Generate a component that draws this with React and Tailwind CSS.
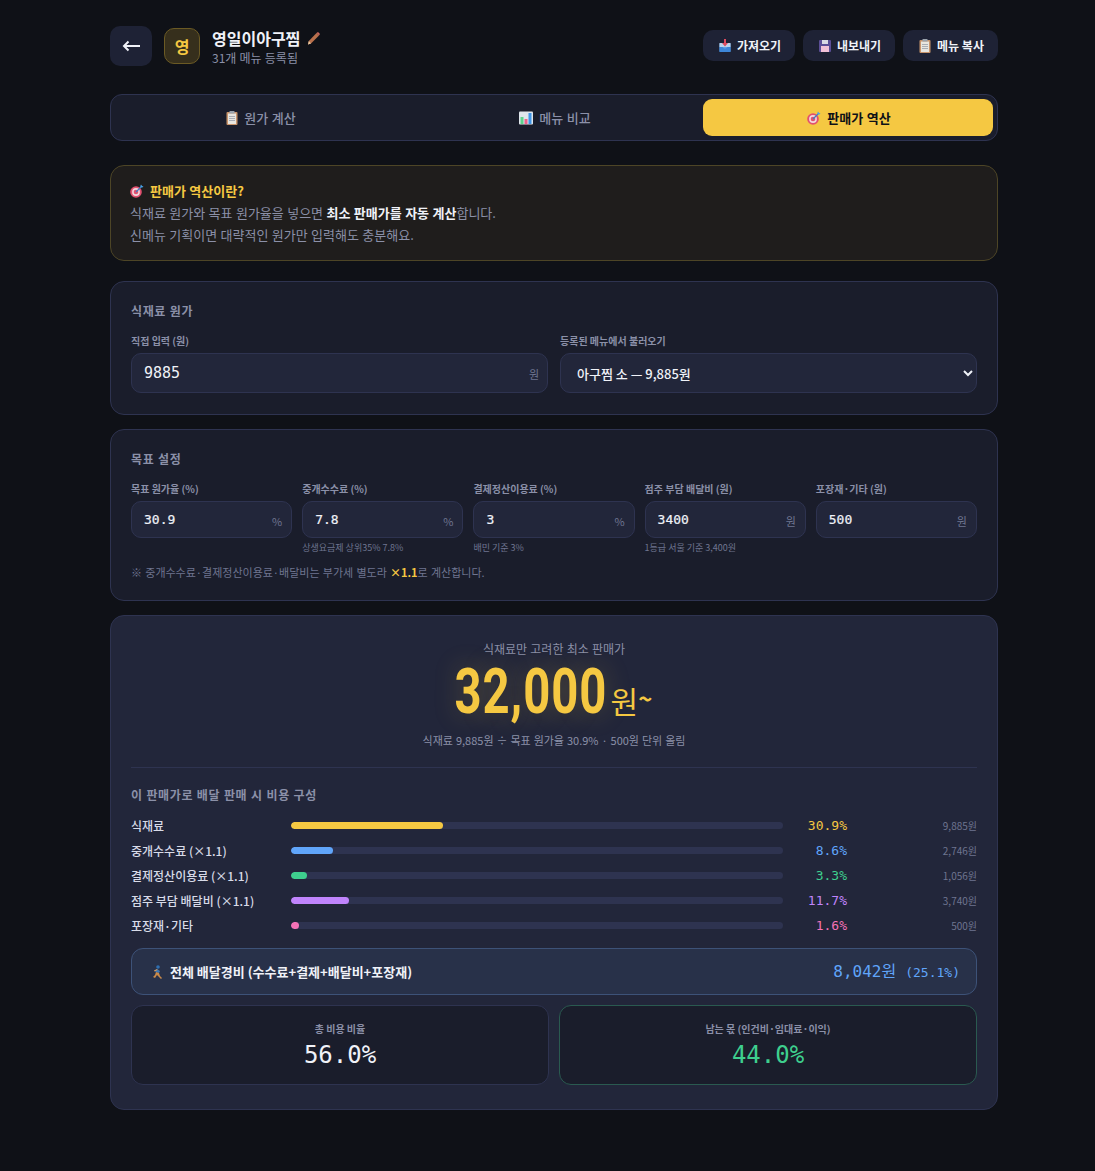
const sans = "font-['Noto_Sans_CJK_KR','Noto_Sans',sans-serif] [word-spacing:0.5px]";
const mono = "font-['DejaVu_Sans_Mono','Noto_Sans_CJK_KR',monospace] [word-spacing:0]";

const Clipboard = () => (
  <svg width="12" height="14" viewBox="0 0 12 14" className="shrink-0">
    <rect x="0.5" y="1" width="11" height="13" rx="1" fill="#c9956c" />
    <rect x="2" y="2.5" width="8" height="10.5" fill="#e8e6e0" />
    <rect x="3.5" y="0" width="5" height="2.5" rx="0.5" fill="#9aa3ad" />
    <path d="M3 5.5h6M3 7.5h6M3 9.5h6" stroke="#a9adb5" strokeWidth="1" />
  </svg>
);
const Chart = () => (
  <svg width="14" height="14" viewBox="0 0 14 14" className="shrink-0">
    <rect x="0" y="0.5" width="14" height="13" rx="1" fill="#dfe6ec" />
    <rect x="1.5" y="6" width="3" height="7" fill="#5fd38d" />
    <rect x="5.5" y="8" width="3" height="5" fill="#f0628c" />
    <rect x="9.5" y="2" width="3" height="11" fill="#3f96e8" />
  </svg>
);
const Target = () => (
  <svg width="14" height="14" viewBox="0 0 14 14" className="shrink-0">
    <circle cx="6" cy="8" r="5.8" fill="#e2506f" />
    <circle cx="6" cy="8" r="3.9" fill="#f3d7dd" />
    <circle cx="6" cy="8" r="2.3" fill="#e2506f" />
    <path d="M6 8 12 2" stroke="#3c7fc4" strokeWidth="1.3" />
    <path d="M10.5 1.5 11 0.5l1 1.5 1.5.5-1.2 1-1.8-.2z" fill="#4aa3e8" />
  </svg>
);
const Inbox = () => (
  <svg width="12" height="13" viewBox="0 0 12 13" className="shrink-0">
    <rect x="0.5" y="4" width="11" height="9" rx="1" fill="#5ea0e6" />
    <rect x="0.5" y="4" width="11" height="4" fill="#b9d4ee" />
    <path d="M3.5 8 5 9.5h2L8.500 8h3v5h-11V8z" fill="#3d86d8" />
    <path d="M5 0h2v4h2L6 7.500 3 4h2z" fill="#dd4b5e" />
  </svg>
);
const Floppy = () => (
  <svg width="12" height="12" viewBox="0 0 12 12" className="shrink-0">
    <rect x="0" y="0" width="12" height="12" rx="1" fill="#5b4e96" />
    <rect x="3" y="0" width="6" height="4" fill="#d9d9e4" />
    <rect x="2" y="6" width="8" height="6" fill="#f2c2d8" />
  </svg>
);
const Pencil = () => (
  <svg width="13" height="13" viewBox="0 0 13 13" className="shrink-0">
    <path d="M9.500 1 12 3.500 4 11.500 1 12.500 1.800 9z" fill="#b8704c" />
    <path d="M9.500 1 11 0l2 2-1 1.500z" fill="#d0695f" />
    <path d="M1.800 9 4 11.500 1 12.500z" fill="#e8c9a0" />
  </svg>
);
const Runner = () => (
  <svg width="11" height="14" viewBox="0 0 11 14" className="shrink-0">
    <circle cx="6" cy="2" r="1.800" fill="#2f6fb0" />
    <path d="M5 4 8 6 7 8 3 7z" fill="#3a76b5" />
    <path d="M4 7l3 1 1 3 2 2-1 1-3-3-1-1-2 3-2-1 2-2z" fill="#c98a4a" />
    <path d="M2 5.500 5 4l.500 1-3 1.500z" fill="#d9a066" />
  </svg>
);

function Field({ label, value, unit, hint }) {
  return (
    <div className="flex flex-col">
      <div className="text-[10px] leading-[15px] font-semibold text-[#8b90a8] mt-[1px] mb-[5px] [word-spacing:0]">{label}</div>
      <div className="h-[37px] rounded-[10px] border border-[#2e3350] bg-[#22263a] flex items-center justify-between pl-[12px] pr-[9px]">
        <span className={`${mono} text-[13px] text-[#f0f2f8] [-webkit-text-stroke:0.2px_#f0f2f8]`}>{value}</span>
        <span className="text-[11px] text-[#6f7590] mt-[3px]">{unit}</span>
      </div>
      {hint ? <div className="text-[9px] leading-[14px] text-[#6f7590] mt-[3px] [word-spacing:0]">{hint}</div> : null}
    </div>
  );
}

function Row({ label, pct, width, amount, barClass, textClass }) {
  return (
    <div className="h-[25px] flex items-center">
      <div className="w-[160px] shrink-0 text-[12px] font-medium text-[#d8dbe8] [word-spacing:0]">{label}</div>
      <div className="w-[492px] shrink-0 h-[7px] rounded-full bg-[#2e3350] overflow-hidden">
        <div className={`h-full rounded-full ${barClass}`} style={{ width }} />
      </div>
      <div className={`${mono} w-[64px] shrink-0 text-right text-[13px] ${textClass}`}>{pct}</div>
      <div className="flex-1 text-right text-[10px] text-[#6f7590]">{amount}</div>
    </div>
  );
}

function TopButton({ icon, label, w }) {
  return (
    <button className={`${w} h-[31px] pl-[2px] rounded-[10px] bg-[#1e2235] flex items-center justify-center gap-[6px] text-[12px] font-bold text-[#f0f2f8]`}>
      {icon}
      <span>{label}</span>
    </button>
  );
}

export default function App() {
  return (
    <div className={`${sans} min-h-[1171px] bg-[#0f1117] pt-[26px] pl-[110px] pr-[97px] pb-[61px]`}>
      <header className="flex items-center justify-between h-[40px]">
        <div className="flex items-center">
          <button className="w-[42px] h-[40px] rounded-[10px] bg-[#1e2235] text-[#f0f2f8] flex items-center justify-center">
            <svg width="18" height="12" viewBox="0 0 18 12" fill="none" stroke="currentColor" strokeWidth="2">
              <path d="M18 6H2M6.500 1.500 2 6l4.500 4.500" />
            </svg>
          </button>
          <div className="ml-[12px] w-[36px] h-[36px] rounded-[10px] border border-[#6b5a24] bg-[#362f1c] flex items-center justify-center text-[16px] font-bold text-[#f5c842]">영</div>
          <div className="ml-[12px]">
            <div className="flex items-center gap-[7px] text-[16px] leading-[21px] font-bold text-[#f0f2f8]">
              <span>영일이아구찜</span><Pencil />
            </div>
            <div className="mt-[2px] text-[12px] leading-[14px] text-[#8b90a8]">31개 메뉴 등록됨</div>
          </div>
        </div>
        <div className="flex gap-[8px] mb-[1px]">
          <TopButton icon={<Inbox />} label="가져오기" w="w-[92px]" />
          <TopButton icon={<Floppy />} label="내보내기" w="w-[92px]" />
          <TopButton icon={<Clipboard />} label="메뉴 복사" w="w-[95px]" />
        </div>
      </header>

      <nav className="mt-[28px] h-[47px] rounded-[12px] border border-[#2e3350] bg-[#1a1d2b] p-[4px] grid grid-cols-3 gap-[4px]">
        <div className="rounded-[9px] pl-[2px] flex items-center justify-center gap-[6px] text-[13px] font-medium text-[#8b90a8]"><Clipboard /><span>원가 계산</span></div>
        <div className="rounded-[9px] pl-[2px] flex items-center justify-center gap-[6px] text-[13px] font-medium text-[#8b90a8]"><Chart /><span>메뉴 비교</span></div>
        <div className="rounded-[9px] pl-[2px] bg-[#f5c842] flex items-center justify-center gap-[6px] text-[13px] font-bold text-[#0f1117]"><Target /><span>판매가 역산</span></div>
      </nav>

      <section className="mt-[24px] h-[96px] rounded-[14px] border border-[#4d4526] bg-[#1f1d1c] px-[19px] pt-[14px]">
        <div className="flex items-center gap-[6px] text-[13px] leading-[22px] font-bold text-[#f5c842]"><Target /><span>판매가 역산이란?</span></div>
        <div className="text-[13px] leading-[22px] text-[#8b90a8]">식재료 원가와 목표 원가율을 넣으면 <b className="font-bold text-[#f0f2f8]">최소 판매가를 자동 계산</b>합니다.</div>
        <div className="text-[13px] leading-[22px] text-[#8b90a8]">신메뉴 기획이면 대략적인 원가만 입력해도 충분해요.</div>
      </section>

      <section className="mt-[20px] h-[134px] rounded-[14px] border border-[#2e3350] bg-[#1a1d2b] px-[20px] pt-[19px]">
        <div className="text-[12px] leading-[20px] font-bold tracking-[0.05em] text-[#8b90a8]">식재료 원가</div>
        <div className="mt-[12px] grid grid-cols-2 gap-[12px]">
          <div>
            <div className="text-[10px] leading-[15px] font-semibold text-[#8b90a8] mb-[5px] [word-spacing:0]">직접 입력 (원)</div>
            <div className="h-[40px] rounded-[10px] border border-[#2e3350] bg-[#22263a] flex items-center justify-between pl-[12px] pr-[8px]">
              <span className={`${mono} text-[15px] text-[#f0f2f8]`}>9885</span>
              <span className="text-[11px] text-[#6f7590] mt-[3px]">원</span>
            </div>
          </div>
          <div>
            <div className="text-[10px] leading-[15px] font-semibold text-[#8b90a8] mb-[5px] [word-spacing:0]">등록된 메뉴에서 불러오기</div>
            <select defaultValue="a" className="w-full h-[40px] rounded-[10px] border border-[#2e3350] bg-[#22263a] pl-[12px] pr-[8px] text-[13px] font-medium text-[#f0f2f8]">
              <option value="a">아구찜 소 — 9,885원</option>
            </select>
          </div>
        </div>
      </section>

      <section className="mt-[14px] h-[172px] rounded-[14px] border border-[#2e3350] bg-[#1a1d2b] px-[20px] pt-[19px]">
        <div className="text-[12px] leading-[20px] font-bold tracking-[0.05em] text-[#8b90a8]">목표 설정</div>
        <div className="mt-[11px] grid grid-cols-5 gap-[10px]">
          <Field label="목표 원가율 (%)" value="30.9" unit="%" />
          <Field label="중개수수료 (%)" value="7.8" unit="%" hint="상생요금제 상위35% 7.8%" />
          <Field label="결제정산이용료 (%)" value="3" unit="%" hint="배민 기준 3%" />
          <Field label="점주 부담 배달비 (원)" value="3400" unit="원" hint="1등급 서울 기준 3,400원" />
          <Field label="포장재·기타 (원)" value="500" unit="원" />
        </div>
        <div className="mt-[9px] text-[11px] leading-[16px] text-[#6f7590] [word-spacing:0.8px]">※ 중개수수료·결제정산이용료·배달비는 부가세 별도라 <b className="font-bold text-[#f5c842]">×1.1</b>로 계산합니다.</div>
      </section>

      <section className="mt-[14px] h-[495px] rounded-[14px] border border-[#2e3350] bg-[#22263a] px-[20px] pt-[25px]">
        <div className="text-center text-[12px] leading-[16px] text-[#8b90a8]">식재료만 고려한 최소 판매가</div>
        <div className="h-[68px] flex items-start justify-center text-[#f5c842]">
          <span className="w-[150px] h-[62px] mt-[4px] flex justify-center">
            <span className="font-['Roboto',sans-serif] font-bold text-[63px] leading-[62px] tracking-[0.02em] shrink-0 inline-block whitespace-nowrap scale-x-[0.75] [text-shadow:0_0_30px_rgba(245,200,66,0.25)]">32,000</span>
          </span>
          <span className="text-[30px] leading-[40px] mt-[23px] ml-[5px]">원</span>
          <span className="text-[24px] leading-[40px] mt-[21px] font-bold">~</span>
        </div>
        <div className="mt-[7px] text-center text-[11px] leading-[16px] text-[#8b90a8]">식재료 9,885원 ÷ 목표 원가율 30.9% · 500원 단위 올림</div>

        <div className="mt-[19px] border-t border-[#2e3350]" />
        <div className="mt-[18px] text-[12px] leading-[18px] font-bold tracking-[0.05em] text-[#8b90a8]">이 판매가로 배달 판매 시 비용 구성</div>
        <div className="mt-[9px]">
          <Row label="식재료" pct="30.9%" width="30.9%" amount="9,885원" barClass="bg-[#f5c842]" textClass="text-[#f5c842]" />
          <Row label="중개수수료 (×1.1)" pct="8.6%" width="8.6%" amount="2,746원" barClass="bg-[#60a5fa]" textClass="text-[#60a5fa]" />
          <Row label="결제정산이용료 (×1.1)" pct="3.3%" width="3.3%" amount="1,056원" barClass="bg-[#3ecf8e]" textClass="text-[#3ecf8e]" />
          <Row label="점주 부담 배달비 (×1.1)" pct="11.7%" width="11.7%" amount="3,740원" barClass="bg-[#c084fc]" textClass="text-[#c084fc]" />
          <Row label="포장재·기타" pct="1.6%" width="1.6%" amount="500원" barClass="bg-[#f472b6]" textClass="text-[#f472b6]" />
        </div>
        <div className="mt-[10px] h-[47px] rounded-[12px] border border-[#3d5278] bg-[#283149] flex items-center justify-between pl-[20px] pr-[16px]">
          <span className="flex items-center gap-[7px] text-[13px] font-bold text-[#f0f2f8] [word-spacing:0]"><Runner /><span>전체 배달경비 (수수료+결제+배달비+포장재)</span></span>
          <span className={`${mono} text-[#60a5fa]`}>
            <span className="text-[16px]">8,042원</span>
            <span className="text-[13px] ml-[9px]">(25.1%)</span>
          </span>
        </div>
        <div className="mt-[10px] grid grid-cols-2 gap-[10px]">
          <div className="h-[80px] rounded-[12px] border border-[#2e3350] bg-[#1a1d2b] flex flex-col items-center pt-[15px]">
            <div className="text-[10px] leading-[16px] font-semibold text-[#8b90a8] [word-spacing:0]">총 비용 비율</div>
            <div className={`${mono} text-[24px] leading-[30px] mt-[3px] text-[#f0f2f8]`}>56.0%</div>
          </div>
          <div className="h-[80px] rounded-[12px] border border-[#2a5a50] bg-[#1a1d2b] flex flex-col items-center pt-[15px]">
            <div className="text-[10px] leading-[16px] font-semibold text-[#8b90a8] [word-spacing:0]">남는 몫 (인건비·임대료·이익)</div>
            <div className={`${mono} text-[24px] leading-[30px] mt-[3px] text-[#3ecf8e]`}>44.0%</div>
          </div>
        </div>
      </section>
    </div>
  );
}
